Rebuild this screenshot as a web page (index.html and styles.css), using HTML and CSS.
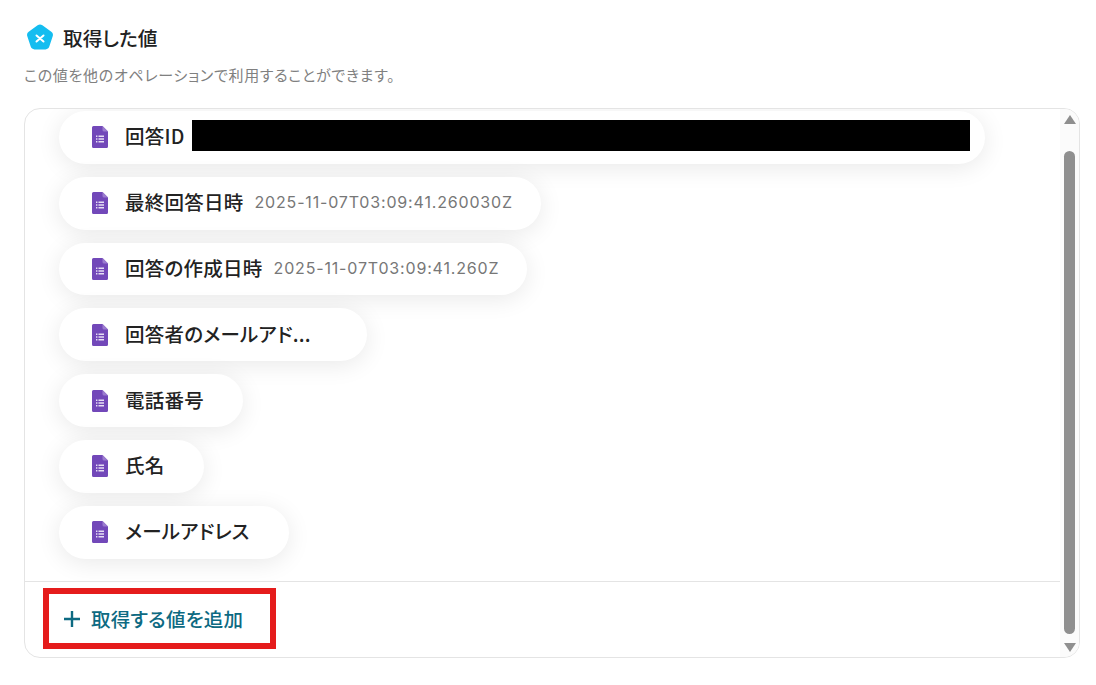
FILE: index.html
```html
<!DOCTYPE html>
<html lang="ja">
<head>
    <meta charset="UTF-8">
    <link rel="stylesheet" href="styles.css">
    <title>取得した値</title>
</head>
<body>
    <div class="heading">
        <svg class="logo" width="28" height="28" viewBox="0 0 28 28">
            <path d="M11.600 1.300a4 4 0 0 1 4.800 0l8.900 6.500a4 4 0 0 1 1.400 4.500l-3.400 10.300a4 4 0 0 1-3.800 2.800H8.500a4 4 0 0 1-3.800-2.800L1.300 12.300a4 4 0 0 1 1.400-4.500z" fill="#14bdf0"/>
            <path d="M10.500 11.500l7 6M17.500 11.500l-7 6" stroke="#fff" stroke-width="2" stroke-linecap="round"/>
        </svg>
        <h1>取得した値</h1>
    </div>
    <p class="note">この値を他のオペレーションで利用することができます。</p>

    <div class="box">
        <div class="main">
            <div class="list">
                <div class="pill pill-first">
                    <svg class="doc" width="16" height="22" viewBox="0 0 16 22"><use href="#form-icon"/></svg>
                    <span class="name">回答ID</span>
                    <span class="redacted"></span>
                </div>
                <div class="pill">
                    <svg class="doc" width="16" height="22" viewBox="0 0 16 22"><use href="#form-icon"/></svg>
                    <span class="name">最終回答日時</span>
                    <span class="value">2025-11-07T03:09:41.260030Z</span>
                </div>
                <div class="pill">
                    <svg class="doc" width="16" height="22" viewBox="0 0 16 22"><use href="#form-icon"/></svg>
                    <span class="name">回答の作成日時</span>
                    <span class="value">2025-11-07T03:09:41.260Z</span>
                </div>
                <div class="pill">
                    <svg class="doc" width="16" height="22" viewBox="0 0 16 22"><use href="#form-icon"/></svg>
                    <span class="name name-cut">回答者のメールアド...</span>
                </div>
                <div class="pill">
                    <svg class="doc" width="16" height="22" viewBox="0 0 16 22"><use href="#form-icon"/></svg>
                    <span class="name">電話番号</span>
                </div>
                <div class="pill">
                    <svg class="doc" width="16" height="22" viewBox="0 0 16 22"><use href="#form-icon"/></svg>
                    <span class="name">氏名</span>
                </div>
                <div class="pill">
                    <svg class="doc" width="16" height="22" viewBox="0 0 16 22"><use href="#form-icon"/></svg>
                    <span class="name">メールアドレス</span>
                </div>
            </div>
            <div class="footer">
                <button class="add">
                    <svg width="18" height="18" viewBox="0 0 18 18"><path d="M9 1v16M1 9h16" stroke="#0d6a82" stroke-width="2.400"/></svg>
                    取得する値を追加
                </button>
                <div class="highlight"></div>
            </div>
        </div>
        <div class="scrollbar">
            <span class="arrow arrow-up"></span>
            <span class="thumb"></span>
            <span class="arrow arrow-down"></span>
        </div>
    </div>

    <svg width="0" height="0" class="defs">
        <symbol id="form-icon" viewBox="0 0 16 22">
            <path d="M1.500 0H10.500L16 5.500V20.500A1.500 1.500 0 0 1 14.500 22H1.500A1.500 1.500 0 0 1 0 20.500V1.500A1.500 1.500 0 0 1 1.500 0Z" fill="#7248b9"/>
            <path d="M10.500 0L16 5.500H12A1.500 1.500 0 0 1 10.500 4Z" fill="#9b7ccf"/>
            <path d="M4 9.500h1.400v1.400H4zM6.500 9.500H12v1.400H6.500zM4 12.300h1.400v1.400H4zM6.500 12.300H12v1.400H6.500zM4 15.100h1.400v1.400H4zM6.500 15.100H12v1.400H6.500z" fill="#e6def4"/>
        </symbol>
    </svg>
</body>
</html>
```

FILE: styles.css
```css
body {
    font-family: "Noto Sans CJK JP", "Noto Sans", sans-serif;
    font-feature-settings: "palt";
    background-color: #fff;
    color: #222;
    margin: 0;
    padding: 24px 16px 0 24px;
}

.heading {
    display: flex;
    align-items: center;
    gap: 9px;
    height: 28px;
    padding-left: 2px;
}

.heading h1 {
    margin: 0 0 1px;
    font-size: 19.700px;
    line-height: 26px;
    font-weight: 500;
}

.note {
    margin: 13px 0 0;
    font-size: 15px;
    line-height: 20px;
    letter-spacing: 0.700px;
    color: #808080;
}

.box {
    display: flex;
    height: 548px;
    margin-top: 23px;
    border: 1px solid #e4e4e4;
    border-radius: 16px;
    overflow: hidden;
}

.main {
    flex: 1;
    display: flex;
    flex-direction: column;
}

.list {
    flex: 1;
    display: flex;
    flex-direction: column;
    align-items: flex-start;
    gap: 13px;
    padding: 2px 0 0 34px;
}

.pill {
    display: flex;
    align-items: center;
    height: 52.800px;
    padding: 0 28px 0 33px;
    border-radius: 27px;
    background-color: #fff;
    box-shadow: 0 4px 24px rgba(0, 0, 0, 0.09);
}

.doc {
    flex: none;
    margin-right: 17px;
}

.name {
    margin: 0 11px 2px 0;
    font-size: 19.500px;
    line-height: 26px;
    letter-spacing: 0.250px;
    font-weight: 500;
    white-space: nowrap;
}

.name-cut {
    width: 203px;
}

.value {
    margin-bottom: 2px;
    font-family: Inter, "Liberation Sans", sans-serif;
    font-size: 16px;
    letter-spacing: 0.830px;
    color: #777;
    white-space: nowrap;
}

.redacted {
    width: 778px;
    height: 31px;
    margin: 0 -13px 4px -4px;
    background-color: #000;
}

.footer {
    position: relative;
    flex: none;
    height: 75px;
    border-top: 1px solid #e4e4e4;
}

.add {
    display: flex;
    align-items: center;
    gap: 10px;
    margin: 24px 0 0 38px;
    padding: 0;
    border: none;
    background: none;
    font-family: inherit;
    font-feature-settings: inherit;
    font-size: 19.500px;
    line-height: 26px;
    letter-spacing: 0.200px;
    font-weight: 500;
    color: #0d6a82;
}

.highlight {
    position: absolute;
    left: 18px;
    top: 6px;
    width: 221px;
    height: 49px;
    border: 6px solid #e51c1c;
}

.scrollbar {
    flex: none;
    width: 19px;
    display: flex;
    flex-direction: column;
    align-items: center;
    background-color: #fbfbfb;
}

.thumb {
    flex: 1;
    width: 11px;
    margin: 27px 0 9px;
    border-radius: 6px;
    background-color: #8f8f8f;
}

.arrow {
    width: 0;
    height: 0;
    border-left: 6.500px solid transparent;
    border-right: 6.500px solid transparent;
}

.arrow-up {
    margin-top: 6px;
    border-bottom: 9px solid #8f8f8f;
}

.arrow-down {
    margin-bottom: 5px;
    border-top: 9px solid #8f8f8f;
}

.defs {
    position: absolute;
}
```
